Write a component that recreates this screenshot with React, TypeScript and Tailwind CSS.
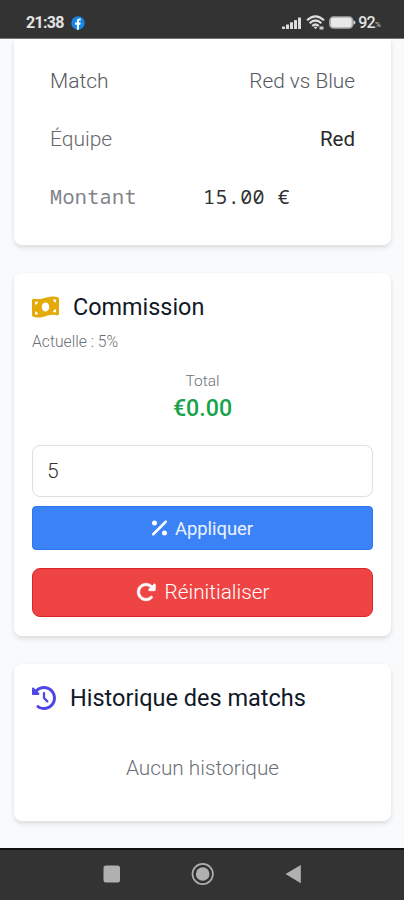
import type { ReactNode } from "react";
import { FaClockRotateLeft, FaMoneyBillWave, FaPercent, FaRotateRight } from "react-icons/fa6";

interface CardProps {
  className: string;
  children: ReactNode;
}

function Card({ className, children }: CardProps) {
  return (
    <section
      className={`mr-[13px] ml-3.5 bg-white shadow-[0_3px_5px_rgba(0,0,0,0.11),0_0_4px_rgba(0,0,0,0.02)] ${className}`}
    >
      {children}
    </section>
  );
}

function StatusBar() {
  return (
    <header className="flex h-[39px] shrink-0 items-center border-b border-[#777] bg-[#333] pt-[7px] pr-[21px] pl-[26px] text-[#e4e4e4]">
      <span className="w-[38px] text-base leading-5 font-bold tracking-[-0.7px]">21:38</span>
      <svg className="ml-[7px] size-[14px]" viewBox="0 0 15 15">
        <circle cx="7.5" cy="7.5" r="7.2" fill="#1686e8" />
        <path
          d="M6.3 14.6V9.3H4.5V7h1.8V5.6c0-1.9 1.1-2.9 2.7-2.9h1.4v2H9.5c-.8 0-1 .5-1 1V7h1.9L10 9.3H8.5v5.3z"
          fill="#fff"
        />
      </svg>
      <svg className="ml-auto h-[14px] w-[19px]" viewBox="0 0 19 14" fill="#ddd">
        <rect x="0" y="10.5" width="3" height="2.5" rx="0.5" />
        <rect x="4" y="8.5" width="3" height="4.5" rx="0.5" />
        <rect x="8" y="6.3" width="3" height="6.7" rx="0.5" />
        <rect x="12" y="4" width="3" height="9" rx="0.5" />
        <rect x="16" y="1.5" width="3" height="11.5" rx="0.5" />
      </svg>
      <svg className="ml-[5px] h-[15px] w-[19px]" viewBox="0 0 19 15" fill="none" stroke="#ddd" strokeWidth="2.2">
        <path d="M1 5.2Q9.5-2.6 18 5.2" />
        <path d="M3.6 8.2q5.9-5.4 11.8 0" />
        <path d="M6.2 11q3.3-3 6.6 0" />
        <path d="M7.4 11.7h4.2l-2.1 2.5z" fill="#ddd" stroke="none" />
        <path d="M13.5 11.5h4v3h-4z" fill="#ccc" stroke="none" />
      </svg>
      <svg className="ml-[4px] h-[13px] w-[27px]" viewBox="0 0 27 13">
        <rect x="1" y="1" width="22.5" height="11" rx="3.5" fill="#e8e8e8" stroke="#aaa" strokeWidth="1.7" />
        <path d="M24.3 4.2q2.2.5 2.2 2.3t-2.2 2.3z" fill="#ccc" />
      </svg>
      <span className="ml-[2px] text-base leading-5 font-medium tracking-[-0.7px]">92</span>
      <span className="w-[8px] pt-1 text-[8px] leading-4 text-[#ccc]">%</span>
    </header>
  );
}

function NavBar() {
  return (
    <nav className="h-[52px] shrink-0 border-t-2 border-[#111] bg-[#333]">
      <svg className="h-[50px] w-full" viewBox="0 0 404 50" fill="#b0b0b0">
        <rect x="103.5" y="15.5" width="16.5" height="17" rx="2.5" />
        <circle cx="202.7" cy="24" r="6.8" />
        <circle cx="202.7" cy="24" r="10.2" fill="none" stroke="#b0b0b0" strokeWidth="1.7" />
        <path d="M285.5 24 300.8 15v18.3z" />
      </svg>
    </nav>
  );
}

export default function App() {
  return (
    <div className="flex h-[900px] w-[404px] flex-col overflow-hidden bg-[#f9fafb] font-['Roboto',sans-serif]">
      <StatusBar />

      <main className="flex-1">
        <Card className="h-[206px] rounded-b-lg px-9 pt-[28px] text-[21px] leading-7 font-light">
          <div className="flex justify-between text-[#55585d]">
            <span>Match</span>
            <span className="text-[20.8px]">Red vs Blue</span>
          </div>
          <div className="mt-[30px] flex justify-between">
            <span className="text-[#65686d]">Équipe</span>
            <span className="text-[20.5px] leading-7 font-normal text-[#2a2a2a]">Red</span>
          </div>
          <div className="mt-[30px] flex font-['Noto_Sans_Mono','DejaVu_Sans_Mono',monospace] text-xl leading-7 font-normal tracking-[0.4px]">
            <span className="w-[153px] text-[#808388]">Montant</span>
            <span className="text-[#333]">15.00 €</span>
          </div>
        </Card>

        <Card className="mt-7 h-[363px] rounded-lg px-[18px] pt-5">
          <h2 className="flex h-7 items-center pt-px text-[23.4px] text-[#111827]">
            <FaMoneyBillWave className="mr-[14px] mb-0.5 h-6 w-[27px] text-[#e3aa08]" />
            Commission
          </h2>
          <p className="mt-[11px] text-[15.7px] leading-5 font-light text-[#6b7078]">Actuelle : 5%</p>
          <div className="mt-[19px] text-center">
            <p className="text-[15.5px] leading-5 font-light text-[#6b7078]">Total</p>
            <p className="mt-[3px] text-[23.2px] leading-7 font-medium text-[#16a34a]">€0.00</p>
          </div>
          <input
            type="text"
            defaultValue="5"
            aria-label="Commission"
            className="mt-[23px] block h-[52px] w-full rounded-lg border border-[#dcdfe3] px-3.5 text-[21px] font-light text-[#333]"
          />
          <button className="mt-[9px] flex h-11 w-full items-center justify-center rounded border border-[#2878ee] bg-[#3b82f6] text-[18.4px] text-white/90">
            <FaPercent className="mr-2 h-5 w-[15px] text-white" />
            <span className="pt-px">Appliquer</span>
          </button>
          <button className="mt-[18px] flex h-[49px] w-full items-center justify-center rounded-lg border border-[#dc2626] bg-[#ef4444] text-[20.8px] font-light text-white">
            <FaRotateRight className="mr-[9px] mb-0.5 size-5 overflow-visible stroke-white stroke-[16]" />
            Réinitialiser
          </button>
        </Card>

        <Card className="mt-7 h-[157px] rounded-lg px-[18px] pt-5">
          <h2 className="flex h-7 items-center pt-px text-[23.5px] text-[#111827]">
            <FaClockRotateLeft className="mr-[14px] mb-0.5 size-6 text-[#4f46e5]" />
            Historique des matchs
          </h2>
          <p className="mt-[42px] text-center text-[20.8px] leading-7 font-light text-[#6b7078]">Aucun historique</p>
        </Card>
      </main>

      <NavBar />
    </div>
  );
}
